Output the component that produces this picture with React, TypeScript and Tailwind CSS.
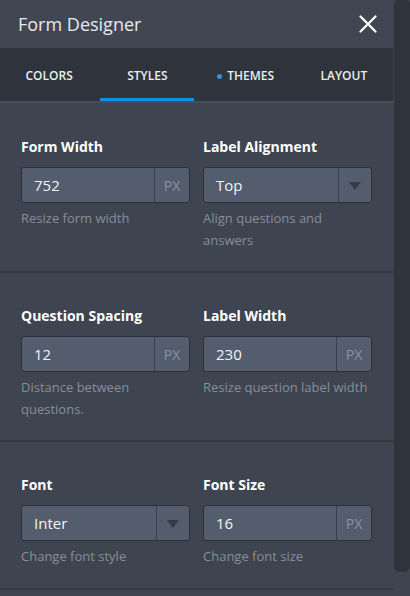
import React from "react";

const font = { fontFamily: '"Open Sans", "Noto Sans", sans-serif' };

function UnitInput({ value }: { value: string }) {
  return (
    <div className="flex h-[36px] w-full rounded-[3px] border border-[#2c3139] bg-[#535d6e]">
      <div className="flex flex-1 items-center pl-[12px] text-[15px] text-[#f3f4f6]">{value}</div>
      <div className="flex w-[35px] items-center justify-center border-l border-[#3a414d] text-[14px] text-[#8993a3]">PX</div>
    </div>
  );
}

function SelectInput({ value, arrowW }: { value: string; arrowW: string }) {
  return (
    <div className="flex h-[36px] w-full rounded-[3px] border border-[#2c3139] bg-[#535d6e]">
      <div className="flex flex-1 items-center pl-[12px] text-[15px] text-[#f3f4f6]">{value}</div>
      <div className={`flex items-center justify-center border-l border-[#3a414d] ${arrowW}`}>
        <svg width="12" height="9" viewBox="0 0 12 9" className="mt-[3px]">
          <polygon points="0,0 12,0 6,8" fill="#363c46" />
        </svg>
      </div>
    </div>
  );
}

function Field({ label, children, help }: { label: string; children: React.ReactNode; help: string }) {
  return (
    <div className="flex flex-col">
      <div className="h-[20px] text-[14px] font-bold leading-[20px] text-white">{label}</div>
      <div className="mt-[10px]">{children}</div>
      <div className="mt-[4px] text-[13px] leading-[22px] text-[#868e9a]">{help}</div>
    </div>
  );
}

export default function App() {
  return (
    <div className="flex h-[596px] w-[410px] overflow-hidden bg-[#3e4450]" style={font}>
      <div className="flex w-[393px] flex-col">
        <div className="flex h-[48px] items-center justify-between bg-[#404753] pl-[18px] pr-[16px]">
          <span className="text-[18px] text-[#e8e9eb]">Form Designer</span>
          <svg width="18" height="18" viewBox="0 0 18 18">
            <path d="M1.5 1.5 L16.5 16.5 M16.5 1.5 L1.5 16.5" stroke="#ffffff" strokeWidth="2.2" strokeLinecap="round" />
          </svg>
        </div>
        <div className="flex h-[53px] bg-[#2f343c]">
          {["COLORS", "STYLES", "THEMES", "LAYOUT"].map((t) => (
            <div key={t} className="relative flex flex-1 items-center justify-center pt-[3px] text-[12px] font-semibold text-[#eceef1]">
              {t === "THEMES" && <span className="mr-[5px] inline-block h-[5px] w-[5px] rounded-full bg-[#3b91dd]" />}
              {t}
              {t === "STYLES" && <div className="absolute bottom-0 left-[2px] right-[3px] h-[3px] bg-[#0b93e2]" />}
            </div>
          ))}
        </div>
        <div className="h-[2px] bg-[#474e59]" />
        <div className="grid grid-cols-2 gap-x-[13px] border-b-2 border-[#343942] px-[21px] pt-[34px] pb-[20px]">
          <Field label="Form Width" help="Resize form width">
            <UnitInput value="752" />
          </Field>
          <Field label="Label Alignment" help="Align questions and answers">
            <SelectInput value="Top" arrowW="w-[33px]" />
          </Field>
        </div>
        <div className="grid grid-cols-2 gap-x-[13px] border-b-2 border-[#343942] px-[21px] pt-[33px] pb-[20px]">
          <Field label="Question Spacing" help="Distance between questions.">
            <UnitInput value="12" />
          </Field>
          <Field label="Label Width" help="Resize question label width">
            <UnitInput value="230" />
          </Field>
        </div>
        <div className="grid grid-cols-2 gap-x-[13px] border-b-2 border-[#343942] px-[21px] pt-[33px] pb-[21px]">
          <Field label="Font" help="Change font style">
            <SelectInput value="Inter" arrowW="w-[33px]" />
          </Field>
          <Field label="Font Size" help="Change font size">
            <UnitInput value="16" />
          </Field>
        </div>
      </div>
      <div className="flex w-[17px] flex-col">
        <div className="ml-[1px] h-[572px] rounded-b-[6px] rounded-t-[4px] bg-[#2f343c]" />
      </div>
    </div>
  );
}
